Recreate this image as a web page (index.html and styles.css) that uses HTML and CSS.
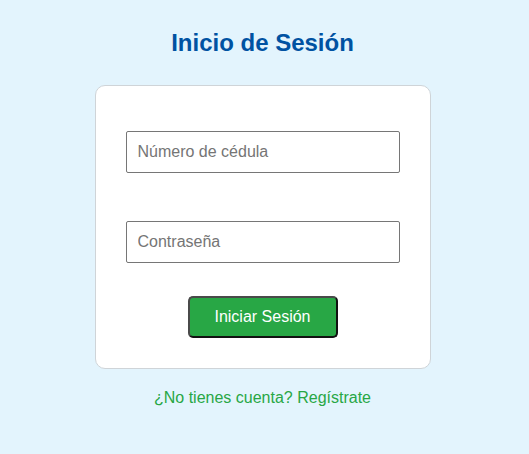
FILE: index.html
```html
<!DOCTYPE html>
<html lang="es">
<head>
<meta charset="utf-8">
<title>Inicio de Sesión</title>
<link rel="stylesheet" href="styles.css">
</head>
<body>
<main class="page">
  <h1 class="title">Inicio de Sesión</h1>
  <form class="card">
    <input class="field" type="text" placeholder="Número de cédula">
    <input class="field" type="password" placeholder="Contraseña">
    <button class="btn" type="button">Iniciar Sesión</button>
  </form>
  <a class="link" href="#">¿No tienes cuenta? Regístrate</a>
</main>
</body>
</html>
```

FILE: styles.css
```css
html, body {
  margin: 0;
  padding: 0;
  height: 100%;
}
body {
  background: #e3f4fd;
  font-family: "Liberation Sans", Arial, sans-serif;
}
.page {
  display: flex;
  flex-direction: column;
  align-items: center;
  padding-top: 29px;
  padding-right: 4px;
}
.title {
  margin: 0 0 28px;
  font-size: 24px;
  font-weight: bold;
  color: #0052a2;
  line-height: 28px;
}
.card {
  box-sizing: border-box;
  width: 336px;
  background: #fff;
  border: 1px solid #cfd4d8;
  border-radius: 10px;
  padding: 45px 30px 30px;
  display: flex;
  flex-direction: column;
  align-items: center;
  margin: 0;
}
.field {
  box-sizing: border-box;
  width: 274px;
  height: 42px;
  padding: 0 11px;
  border: 1px solid #767676;
  border-radius: 2px;
  font-family: inherit;
  font-size: 16px;
  color: #222;
  background: #fff;
  margin: 0;
}
.field::placeholder {
  color: #757575;
}
.field + .field {
  margin-top: 48px;
}
.btn {
  box-sizing: border-box;
  margin-top: 33px;
  width: 150px;
  height: 42px;
  background: #28a745;
  color: #fff;
  border: 2px solid;
  border-color: #4a4a4a #111 #111 #4a4a4a;
  border-radius: 5px;
  font-family: inherit;
  font-size: 16px;
  padding: 0;
  cursor: pointer;
}
.link {
  margin-top: 20px;
  font-size: 16px;
  line-height: 18px;
  color: #28a745;
  text-decoration: none;
}
```
